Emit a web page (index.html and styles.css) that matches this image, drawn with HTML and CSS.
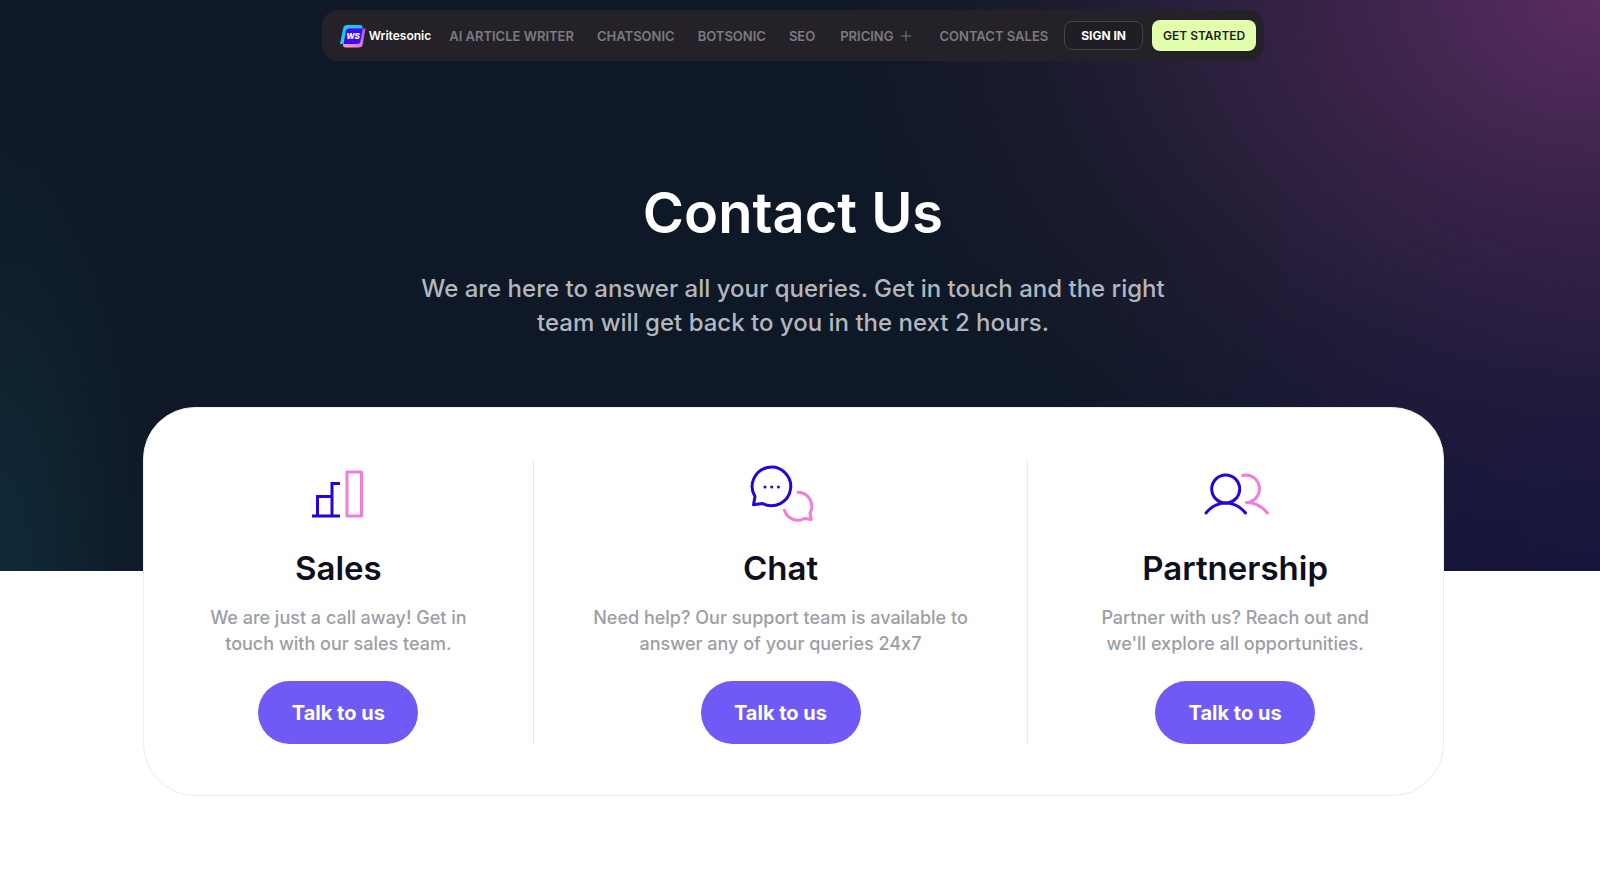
FILE: index.html
```html
<!DOCTYPE html>
<html lang="en">
<head>
<meta charset="utf-8">
<meta name="viewport" content="width=device-width, initial-scale=1">
<title>Contact Us - Writesonic</title>
<link rel="stylesheet" href="styles.css">
</head>
<body>
<div class="page">
  <header class="nav">
    <a class="brand" href="#">
      <svg class="brand-mark" viewBox="0 0 26 24" aria-hidden="true">
        <defs>
          <linearGradient id="cyan" x1="1" y1="0" x2="0" y2="1"><stop offset="0" stop-color="#12c4f5"/><stop offset="1" stop-color="#22d3e4"/></linearGradient>
          <linearGradient id="pink" x1="1" y1="0" x2="0" y2="1"><stop offset="0" stop-color="#b04cf0"/><stop offset="1" stop-color="#ff9ec8"/></linearGradient>
        </defs>
        <path fill="url(#cyan)" d="M6.500 1H20q3 0 2.500 3L20 17q-.6 3-3.500 3H0L3.400 3.600Q4 1 6.500 1z"/>
        <path fill="url(#pink)" d="M8 4.500H25.500L22.800 20q-.6 3.500-3.800 3.500H6q-3.500 0-2.900-3.500z"/>
        <path fill="#3a0df2" d="M8.500 4.500H22.700L20.400 17.500Q20 20 17.500 20H3.500L5.800 7Q6.300 4.500 8.500 4.500z"/>
        <text class="mark-text" x="13" y="15" text-anchor="middle">WS</text>
      </svg>
      <span>Writesonic</span>
    </a>
    <nav class="links" aria-label="Main">
      <a href="#">AI ARTICLE WRITER</a>
      <a href="#">CHATSONIC</a>
      <a href="#">BOTSONIC</a>
      <a href="#">SEO</a>
      <a class="has-menu" href="#">PRICING
        <svg class="plus" viewBox="0 0 10 10" aria-hidden="true"><path d="M5 0v10M0 5h10"/></svg>
      </a>
      <a href="#">CONTACT SALES</a>
    </nav>
    <div class="actions">
      <a class="sign-in" href="#">SIGN IN</a>
      <a class="get-started" href="#">GET STARTED</a>
    </div>
  </header>

  <main>
    <section class="intro">
      <h1>Contact Us</h1>
      <p>We are here to answer all your queries. Get in touch and the right<br>team will get back to you in the next 2 hours.</p>
    </section>

    <section class="card">
      <article class="option">
        <svg class="icon" viewBox="0 0 64 64" aria-hidden="true">
          <path class="ink" d="M6 56H34M11.500 56V36.500H26M26 56V23.500H34"/>
          <rect class="rose round" x="41" y="12" width="14.500" height="44"/>
        </svg>
        <h2>Sales</h2>
        <p>We are just a call away! Get in<br>touch with our sales team.</p>
        <button type="button">Talk to us</button>
      </article>
      <article class="option">
        <svg class="icon" viewBox="0 0 64 64" aria-hidden="true">
          <path class="ink round" d="M6 36.500A19.300 19.300 0 1 1 13.500 43.500L4.500 44.800z"/>
          <g class="dots"><circle cx="16" cy="27" r="1.500"/><circle cx="22.700" cy="27" r="1.500"/><circle cx="29.400" cy="27" r="1.500"/></g>
          <path class="rose round" d="M49 32.300A14 14 0 0 1 61 53L62.200 59.500L55.500 58.500A14 14 0 0 1 35.500 50.300"/>
        </svg>
        <h2>Chat</h2>
        <p>Need help? Our support team is available to<br>answer any of your queries 24x7</p>
        <button type="button">Talk to us</button>
      </article>
      <article class="option">
        <svg class="icon" viewBox="0 0 64 64" aria-hidden="true">
          <path class="rose round" d="M39.700 15.500Q41.500 15 43.500 15A13.800 13.800 0 0 1 48 41.500Q46 42.500 43.500 42.500Q56 42.500 64.300 53"/>
          <circle class="ink" cx="22.700" cy="29" r="14"/>
          <path class="ink round" d="M3 53Q11 43 22.700 43T42.500 53"/>
        </svg>
        <h2>Partnership</h2>
        <p>Partner with us? Reach out and<br>we'll explore all opportunities.</p>
        <button type="button">Talk to us</button>
      </article>
    </section>
  </main>
</div>
</body>
</html>
```
FILE: styles.css
```css
* { box-sizing: border-box; }

body {
  margin: 0;
  background: #fff;
  font-family: Inter, "Open Sans", sans-serif;
  font-feature-settings: "calt" 0;
}

a { color: inherit; text-decoration: none; }
h1, h2, p { margin: 0; }

.page {
  padding: 10px 14px 80px 0;
  background-repeat: no-repeat;
  background-size: 100% 571px;
  background-image:
    radial-gradient(ellipse 760px 560px at 100% 0, #5a2c62 0%, rgba(90, 44, 98, .6) 32%, rgba(90, 44, 98, .2) 68%, transparent 100%),
    radial-gradient(ellipse 600px 460px at 100% 100%, #17163e 0%, transparent 100%),
    radial-gradient(ellipse 160px 480px at 0 100%, #102a38 0%, transparent 100%),
    linear-gradient(#0f1826, #0f1826);
}

.nav {
  display: flex;
  align-items: center;
  width: fit-content;
  height: 51px;
  margin: 0 auto;
  padding: 0 8px 0 18px;
  border-radius: 16px;
  background: #242228;
}

.brand {
  display: flex;
  align-items: center;
  gap: 3px;
  color: #fff;
  font-size: 12px;
  font-weight: 600;
}
.brand-mark { width: 26px; height: 24px; }
.mark-text { fill: #fff; font-size: 8px; font-weight: 800; font-style: italic; }

.links {
  display: flex;
  align-items: center;
  gap: 23px;
  margin: 0 16px 0 18px;
  color: #7c7b7f;
  font-size: 13px;
  font-weight: 600;
  white-space: nowrap;
}
.has-menu { display: flex; align-items: center; gap: 8px; padding: 0 5px 0 2px; }
.plus { width: 10px; height: 10px; fill: none; stroke: #7c7b7f; stroke-width: 1; }

.actions { display: flex; align-items: center; gap: 9px; font-size: 12px; font-weight: 700; white-space: nowrap; }
.sign-in {
  padding: 0 16px;
  border: 1px solid #45434a;
  border-radius: 8px;
  background: #1f1e24;
  color: #fff;
  line-height: 27px;
}
.get-started {
  padding: 0 11px;
  border-radius: 8px;
  background: #e2ffac;
  color: #1c1e1c;
  font-weight: 600;
  line-height: 31px;
}

.intro { padding: 112px 24px 67px; text-align: center; }
.intro h1 { color: #fff; font-size: 56px; font-weight: 600; line-height: 80px; }
.intro p { margin-top: 19px; color: #b3b6bc; font-size: 24px; font-weight: 500; line-height: 34px; }

.card {
  display: grid;
  grid-template-columns: 390fr 494fr 416fr;
  width: 84%;
  max-width: 1301px;
  margin: 0 auto;
  padding: 52px 0 51px;
  border: 1px solid #ececef;
  border-radius: 52px;
  background: #fff;
}

.option {
  display: flex;
  flex-direction: column;
  align-items: center;
  text-align: center;
}
.option + .option { border-left: 1px solid #e8e8ec; }
.option h2 { margin-top: 21px; color: #0d0f1c; font-size: 33px; font-weight: 600; line-height: 46px; }
.option p { margin-top: 14px; color: #9a9ea6; font-size: 18px; line-height: 26px; font-weight: 500; }
.option button {
  width: 160px;
  height: 63px;
  margin-top: 24px;
  border: 0;
  border-radius: 32px;
  background: #705af6;
  color: #fff;
  font: 700 20px Inter, "Open Sans", sans-serif;
}

.icon { width: 64px; height: 64px; overflow: visible; }
.ink { fill: none; stroke: #2a00dc; stroke-width: 3; }
.rose { fill: none; stroke: #f57bdb; stroke-width: 3; }
.round { stroke-linecap: round; stroke-linejoin: round; }
.dots { fill: #2a00dc; }
```
